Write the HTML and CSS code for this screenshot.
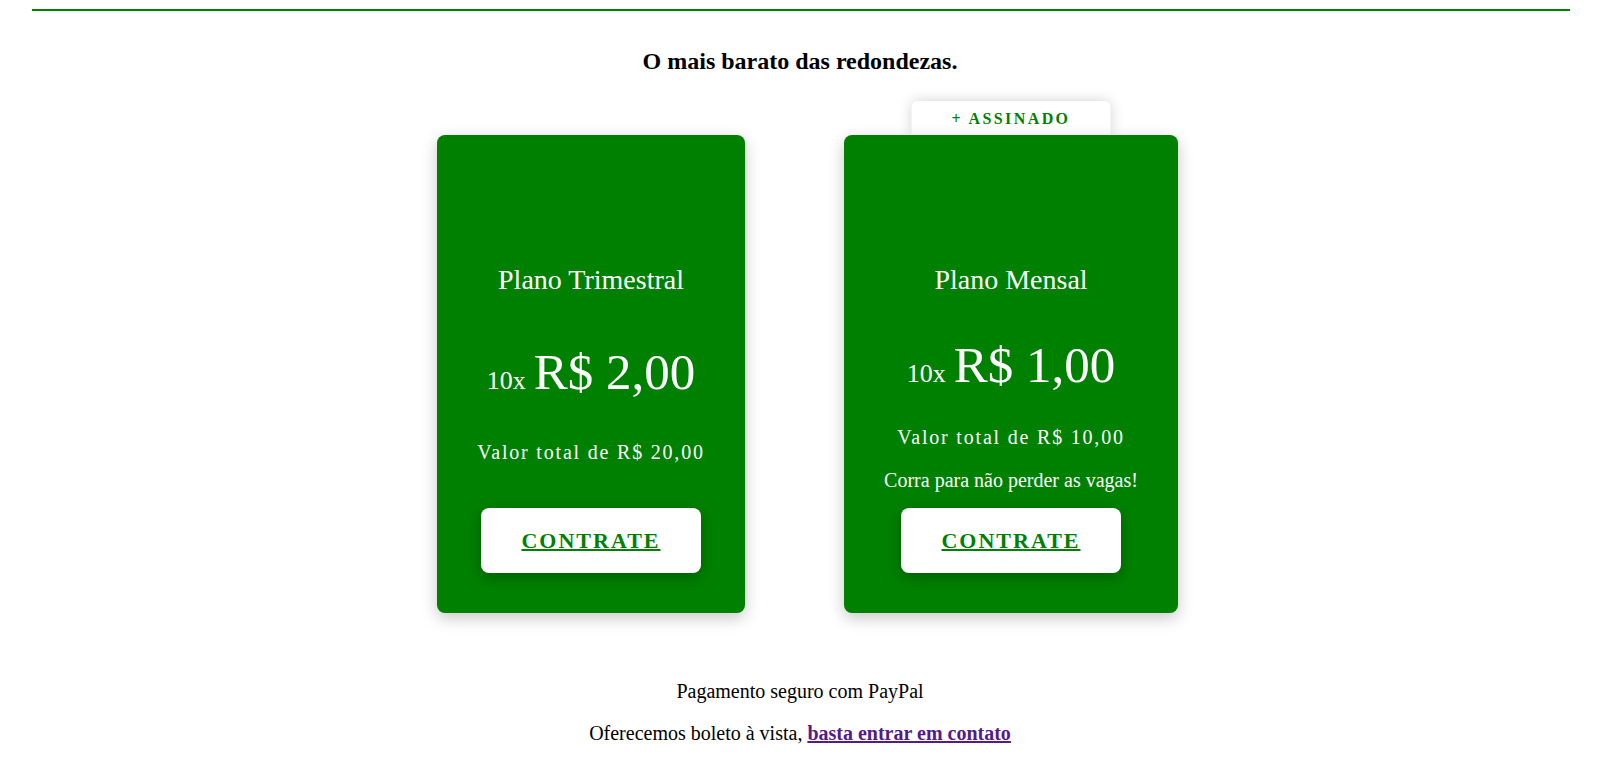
FILE: index.html
```html
<!DOCTYPE html>
<html lang="pt-BR">
<head>
<meta charset="utf-8">
<title>Planos</title>
<link rel="stylesheet" href="styles.css">
</head>
<body>
  <div class="topline"></div>
  <h1 class="headline">O mais barato das redondezas.</h1>

  <section class="plans">
    <article class="plan">
      <h2 class="plan-name">Plano Trimestral</h2>
      <div class="price"><span class="price-times">10x</span>R$ 2,00</div>
      <p class="total">Valor total de R$ 20,00</p>
      <a class="cta" href="#">CONTRATE</a>
    </article>

    <article class="plan">
      <div class="badge">+ ASSINADO</div>
      <h2 class="plan-name">Plano Mensal</h2>
      <div class="price"><span class="price-times">10x</span>R$ 1,00</div>
      <p class="total">Valor total de R$ 10,00</p>
      <p class="note">Corra para não perder as vagas!</p>
      <a class="cta" href="#">CONTRATE</a>
    </article>
  </section>

  <footer class="footer">
    <p>Pagamento seguro com PayPal</p>
    <p>Oferecemos boleto à vista, <a class="contact" href="#">basta entrar em contato</a></p>
  </footer>
</body>
</html>
```

FILE: styles.css
```css
html {
  background: #ffffff;
}

body {
  margin: 0;
  padding: 0;
  font-family: "Liberation Serif", "Times New Roman", serif;
  color: #000000;
}

.topline {
  height: 2px;
  margin: 9px 30px 0 32px;
  background: #008000;
}

.headline {
  margin: 36px 0 0;
  font-size: 24px;
  line-height: 28px;
  font-weight: 700;
  text-align: center;
}

.plans {
  position: relative;
  z-index: 0;
  display: grid;
  grid-template-columns: 420px 420px;
  justify-content: center;
  justify-items: center;
  align-items: stretch;
  margin-top: 60px;
  padding-left: 2px;
}

.plan {
  position: relative;
  display: flex;
  flex-direction: column;
  justify-content: space-between;
  align-items: center;
  padding: 129px 40px 40px;
  background: #008000;
  border-radius: 8px;
  box-shadow: 0 5px 16px rgba(0, 0, 0, 0.22);
  color: #ffffff;
  text-align: center;
}

.badge {
  position: absolute;
  bottom: 100%;
  left: 50%;
  transform: translateX(-50%);
  z-index: -1;
  padding: 9px 40px 7px;
  background: #ffffff;
  border-radius: 6px 6px 0 0;
  box-shadow: 0 0 14px rgba(0, 0, 0, 0.18);
  color: #008000;
  font-size: 16px;
  line-height: 18px;
  font-weight: 700;
  letter-spacing: 2.4px;
  white-space: nowrap;
}

.plan-name {
  margin: 0;
  font-size: 28px;
  line-height: 32px;
  font-weight: 400;
}

.price {
  margin: 41px 0 0;
  font-size: 51px;
  line-height: 56px;
  white-space: nowrap;
}

.price-times {
  font-size: 26px;
  line-height: 1;
  margin-right: 8px;
}

.total {
  margin: 33px 0 21px;
  font-size: 20px;
  line-height: 22px;
  letter-spacing: 1.8px;
  white-space: nowrap;
}

.note {
  margin: 0;
  font-size: 20px;
  line-height: 22px;
  white-space: nowrap;
}

.cta {
  display: block;
  margin-top: 17px;
  padding: 20px 40.5px;
  background: #ffffff;
  border-radius: 8px;
  box-shadow: 0 4px 14px rgba(0, 0, 0, 0.28);
  color: #008000;
  font-size: 22px;
  line-height: 25px;
  font-weight: 700;
  letter-spacing: 2px;
  text-decoration: underline;
  text-decoration-thickness: 2px;
}

.footer {
  margin-top: 67px;
  text-align: center;
  font-size: 20px;
  line-height: 22px;
}

.footer p {
  margin: 0 0 20px;
}

.contact {
  color: #551a8b;
  font-weight: 700;
  text-decoration: underline;
}
```
